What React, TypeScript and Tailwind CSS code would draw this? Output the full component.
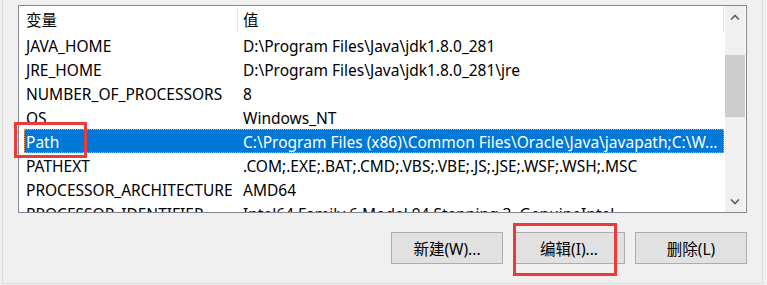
import React from "react";

const rows: [string, string][] = [
  ["JAVA_HOME", "D:\\Program Files\\Java\\jdk1.8.0_281"],
  ["JRE_HOME", "D:\\Program Files\\Java\\jdk1.8.0_281\\jre"],
  ["NUMBER_OF_PROCESSORS", "8"],
  ["OS", "Windows_NT"],
  ["Path", "C:\\Program Files (x86)\\Common Files\\Oracle\\Java\\javapath;C:\\W..."],
  ["PATHEXT", ".COM;.EXE;.BAT;.CMD;.VBS;.VBE;.JS;.JSE;.WSF;.WSH;.MSC"],
  ["PROCESSOR_ARCHITECTURE", "AMD64"],
  ["PROCESSOR_IDENTIFIER", "Intel64 Family 6 Model 94 Stepping 3, GenuineIntel"],
];

const Chevron = ({ up }: { up?: boolean }) => (
  <svg width="10" height="6" viewBox="0 0 10 6">
    <polyline
      points={up ? "1,5.5 5,1.5 9,5.5" : "1,0.5 5,4.5 9,0.5"}
      fill="none"
      stroke="#606060"
      strokeWidth="1.6"
    />
  </svg>
);

export default function App() {
  return (
    <div
      className="relative w-[767px] h-[285px] overflow-hidden bg-[#f0f0f0] text-black text-[15.5px]"
      style={{ fontFamily: '"Noto Sans", "Noto Sans CJK SC", sans-serif' }}
    >
      <div className="ml-[2px] w-[761px] h-[284px] border-x border-b border-[#dcdcdc] pl-[15px] pr-[15px] pt-[5px]">
        <div className="w-[729px] h-[208px] border border-[#828790] bg-white flex">
          <div className="w-[706px] overflow-hidden">
            <div className="h-[27px] flex items-center ml-[5px]">
              <div className="w-[213px] pl-[2px] pt-[2px] leading-none">变量</div>
              <div className="w-px h-[25px] bg-[#e5e5e5]" />
              <div className="w-[485px] pl-[5px] pt-[2px] leading-none">值</div>
              <div className="w-px h-[25px] bg-[#e5e5e5]" />
            </div>
            {rows.map(([k, v]) => {
              const sel = k === "Path";
              return (
                <div
                  key={k}
                  className={
                    "ml-[5px] w-[700px] h-[24px] pt-[4px] flex items-center whitespace-nowrap " +
                    (sel ? "bg-[#0078d7] text-white outline outline-1 outline-dotted outline-[#f0a050] -outline-offset-1" : "")
                  }
                >
                  <div className="w-[213px] pl-[2px] overflow-hidden">{k}</div>
                  <div className="w-[487px] pl-[6px] overflow-hidden">{v}</div>
                </div>
              );
            })}
          </div>
          <div className="w-[20px] bg-[#f0f0f0] flex flex-col">
            <div className="h-[21px] flex items-center justify-center">
              <Chevron up />
            </div>
            <div className="h-[28px]" />
            <div className="h-[62px] bg-[#cdcdcd]" />
            <div className="flex-1" />
            <div className="h-[21px] flex items-center justify-center">
              <Chevron />
            </div>
          </div>
          <div className="w-px" />
        </div>
        <div className="mt-[19px] flex justify-end gap-[10px]">
          {["新建(W)...", "编辑(I)...", "删除(L)"].map((t) => (
            <div
              key={t}
              className="w-[112px] h-[32px] pt-[3px] border border-[#adadad] bg-[#e1e1e1] flex items-center justify-center"
            >
              {t}
            </div>
          ))}
        </div>
      </div>
      <div className="absolute left-[14px] top-[122px] w-[73px] h-[36px] border-[3px] border-[#ec3a3a]" />
      <div className="absolute left-[513px] top-[223px] w-[104px] h-[53px] border-[3px] border-[#ec3a3a]" />
    </div>
  );
}
